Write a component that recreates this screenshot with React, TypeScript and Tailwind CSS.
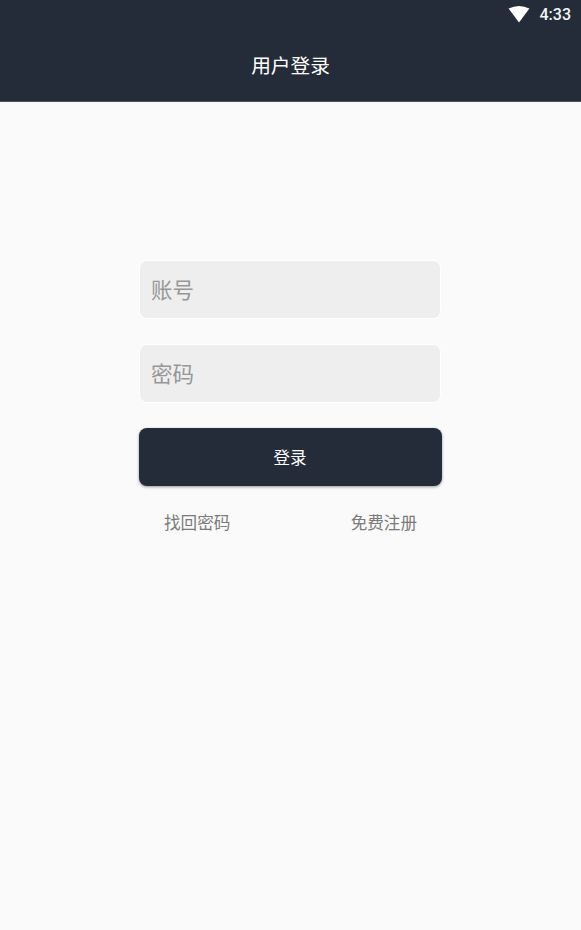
import React from 'react';

const cjk = "font-['Roboto','Noto_Sans_CJK_SC',sans-serif]";

function StatusBar() {
  return (
    <div className="flex h-[30px] items-center justify-end gap-[10px] pr-[10px]">
      <svg width="22" height="17" viewBox="0 0 22 17" className="mt-[-1px]">
        <path d="M0.6 2.6 Q11 -2.6 21.4 2.6 L11 16.6 Z" fill="#ffffff" />
      </svg>
      <span className="font-['Roboto',sans-serif] text-[16px] font-medium leading-none text-[#f4f5f6]">4:33</span>
    </div>
  );
}

function Field({ label }: { label: string }) {
  return (
    <div className="mr-[1px] flex h-[59px] items-center rounded-[8px] border border-white bg-[#eeeeee] pl-[11px] pt-[3px] text-[21.5px] leading-none text-[#979797]">
      {label}
    </div>
  );
}

export default function App() {
  return (
    <div className={`flex h-[930px] w-[581px] flex-col bg-[#fafafa] ${cjk}`}>
      <header className="h-[102px] border-b border-[#4a5260] bg-[#252c39]">
        <StatusBar />
        <h1 className="mt-[25px] text-center text-[19.7px] font-normal leading-[24px] text-white">用户登录</h1>
      </header>

      <main className="ml-[139px] mt-[158px] flex w-[303px] flex-col">
        <div className="flex flex-col gap-[25px]">
          <Field label="账号" />
          <Field label="密码" />
        </div>
        <button className="mt-[25px] flex h-[58px] items-center justify-center rounded-[8px] bg-[#252c39] pr-[1px] pt-[4px] text-[16.5px] leading-none text-white shadow-[0_1px_3px_rgba(0,0,0,0.4)]">
          登录
        </button>
        <div className="mt-[28px] flex justify-between pl-[25px] pr-[25px] text-[16.6px] leading-[20px] text-[#7b7b7b]">
          <span>找回密码</span>
          <span>免费注册</span>
        </div>
      </main>
    </div>
  );
}
